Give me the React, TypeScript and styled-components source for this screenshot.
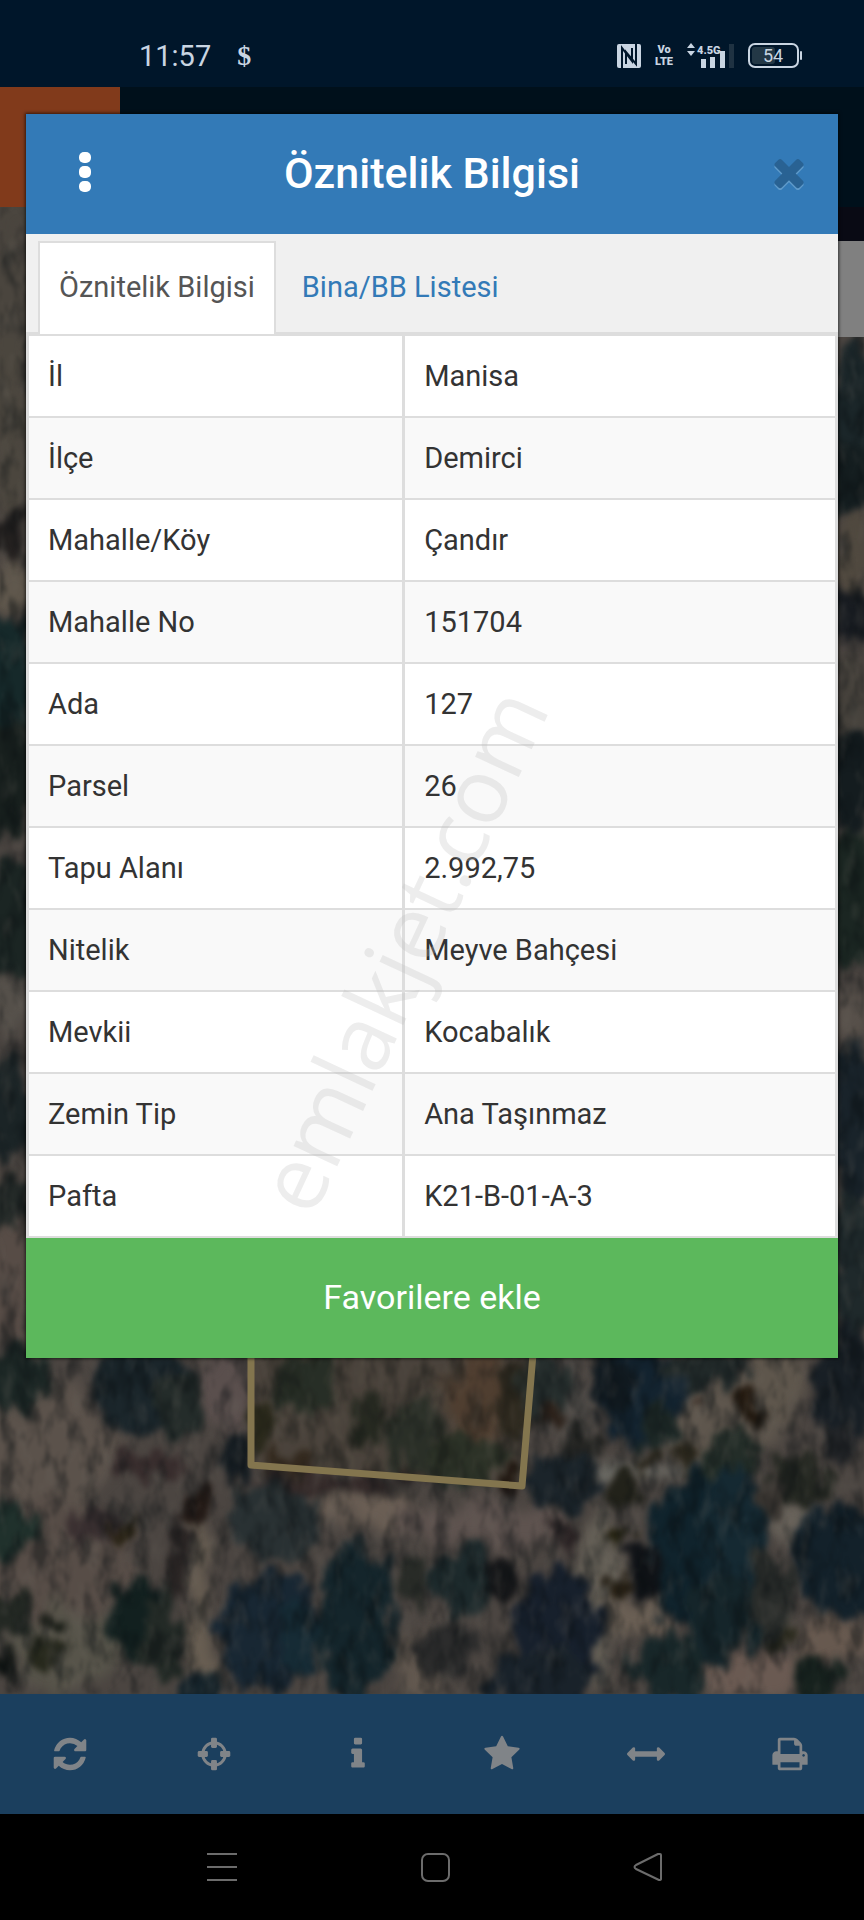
import React from "react";
import styled, { createGlobalStyle } from "styled-components";

const GlobalStyle = createGlobalStyle`
  * { box-sizing: border-box; }
  body { margin: 0; background: #000; }
  body, button { font-family: Roboto, "Noto Sans", sans-serif; }
  button { border: 0; padding: 0; background: none; cursor: pointer; }
  svg { display: block; }
`;

const Screen = styled.div`
  position: relative;
  display: flex;
  flex-direction: column;
  min-height: 100vh;
`;

const StatusBar = styled.div`
  display: flex;
  align-items: center;
  height: 87px;
  padding: 24px 62px 0 139px;
  background: #00162a;
  color: #c9d5e2;
`;

const Clock = styled.span`
  font-size: 29px;
  line-height: 32px;
`;

const Currency = styled.span`
  margin-left: 26px;
  font: bold 28px/32px "Liberation Serif", serif;
`;

const StatusIcons = styled.div`
  display: flex;
  align-items: center;
  gap: 14px;
  margin-left: auto;
`;

const VoLte = styled.span`
  width: 18px;
  font-size: 11px;
  font-weight: 900;
  line-height: 12px;
  text-align: center;
`;

const TopBar = styled.header`
  height: 120px;
  background: #00101b;
`;

const Brand = styled.div`
  width: 120px;
  height: 100%;
  background: #813a1b;
`;

const MapArea = styled.main`
  position: relative;
  flex: 1;
  min-height: 1200px;
  overflow: hidden;
  background: #45403b;
`;

const MapPicture = styled.svg`
  position: absolute;
  inset: 0;
  width: 100%;
  height: 100%;
`;

const MapControl = styled.div`
  position: absolute;
  top: 34px;
  right: 0;
  width: 96px;
  height: 96px;
  background: #808080;
`;

const Toolbar = styled.nav`
  display: grid;
  grid-template-columns: repeat(6, 1fr);
  height: 120px;
  background: #1b3f5e;
`;

const ToolButton = styled.button`
  display: flex;
  align-items: center;
  justify-content: center;
  padding-right: 4px;
  color: #808488;
`;

const SystemNav = styled.nav`
  display: grid;
  grid-template-columns: repeat(3, 1fr);
  height: 106px;
  padding: 0 12.6% 0 13.3%;
  background: #000;
`;

const SystemButton = styled.button`
  display: flex;
  align-items: center;
  justify-content: center;
  color: #6c6c6c;
`;

const Dialog = styled.section`
  position: absolute;
  top: 114px;
  left: 26px;
  right: 26px;
  background: #fff;
  box-shadow: 0 0 3px 1px rgba(0, 0, 0, 0.6);
`;

const DialogHeader = styled.header`
  display: grid;
  grid-template-columns: 116px 1fr 116px;
  align-items: center;
  height: 120px;
  background: #337ab7;
  color: #fff;
`;

const DialogTitle = styled.h1`
  margin: 0;
  padding-bottom: 2px;
  font-size: 43px;
  font-weight: 500;
  line-height: 48px;
  text-align: center;
`;

const HeaderButton = styled.button<{ $end?: boolean }>`
  display: flex;
  align-items: center;
  justify-content: center;
  height: 100%;
  padding: 0 0 4px ${(p) => (p.$end ? 18 : 2)}px;
  color: #fff;
`;

const Tabs = styled.div`
  display: flex;
  align-items: flex-end;
  height: 100px;
  padding: 0 12px;
  border-bottom: 2px solid #ddd;
  background: #f0f0f0;
`;

const Tab = styled.button<{ $active?: boolean }>`
  height: 93px;
  margin-bottom: -2px;
  padding: 0 ${(p) => (p.$active ? 19 : 24)}px 4px;
  border: solid ${(p) => (p.$active ? "#ddd" : "transparent")};
  border-width: 2px 2px 0;
  background: ${(p) => (p.$active ? "#fff" : "transparent")};
  color: ${(p) => (p.$active ? "#555" : "#337ab7")};
  font-size: 29px;
  line-height: 36px;
`;

const TableWrap = styled.div`
  position: relative;
`;

const Table = styled.table`
  width: 100%;
  table-layout: fixed;
  border-collapse: collapse;
  color: #333;
  font-size: 29px;
  line-height: 36px;
`;

const Row = styled.tr`
  height: 82px;
  &:nth-child(even) { background: #f9f9f9; }
`;

const NameCell = styled.th`
  width: 46.5%;
  padding: 0 19px;
  border: solid #ddd;
  border-width: 2px 3px;
  font-weight: 400;
  text-align: left;
`;

const ValueCell = styled.td`
  padding: 0 19px;
  border: solid #ddd;
  border-width: 2px 3px;
`;

const Watermark = styled.span`
  position: absolute;
  top: 68%;
  left: 46%;
  color: rgba(190, 190, 190, 0.28);
  font: 90px/100px "Open Sans", sans-serif;
  transform: translate(-50%, -50%) rotate(-65deg);
  pointer-events: none;
`;

const FavouriteButton = styled.button`
  display: block;
  width: 100%;
  height: 120px;
  padding-bottom: 2px;
  background: #5cb85c;
  color: #fff;
  font-size: 34px;
  line-height: 40px;
`;

const rows: [string, string][] = [
  ["İl", "Manisa"],
  ["İlçe", "Demirci"],
  ["Mahalle/Köy", "Çandır"],
  ["Mahalle No", "151704"],
  ["Ada", "127"],
  ["Parsel", "26"],
  ["Tapu Alanı", "2.992,75"],
  ["Nitelik", "Meyve Bahçesi"],
  ["Mevkii", "Kocabalık"],
  ["Zemin Tip", "Ana Taşınmaz"],
  ["Pafta", "K21-B-01-A-3"],
];

const tools: { label: string; icon: React.ReactNode }[] = [
  {
    label: "Yenile",
    icon: (
      <path d="M1639 1056q0 5-1 7-64 268-268 434.5t-478 166.5q-146 0-282.5-55t-243.5-157l-129 129q-19 19-45 19t-45-19-19-45v-448q0-26 19-45t45-19h448q26 0 45 19t19 45-19 45l-137 137q71 66 161 102t187 36q134 0 250-65t186-179q11-17 53-117 8-23 30-23h192q13 0 22.5 9.5t9.5 22.5zm25-800v448q0 26-19 45t-45 19h-448q-26 0-45-19t-19-45 19-45l138-138q-148-137-349-137-134 0-250 65t-186 179q-11 17-53 117-8 23-30 23h-199q-13 0-22.5-9.5t-9.5-22.5v-7q65-268 270-434.5t480-166.5q146 0 284 55.5t245 156.5l130-129q19-19 45-19t45 19 19 45z" />
    ),
  },
  {
    label: "Konumum",
    icon: (
      <>
        <circle cx="896" cy="896" r="530" fill="none" stroke="currentColor" strokeWidth="140" />
        <rect x="756" y="128" width="280" height="480" rx="64" />
        <rect x="756" y="1184" width="280" height="480" rx="64" />
        <rect x="128" y="756" width="480" height="280" rx="64" />
        <rect x="1184" y="756" width="480" height="280" rx="64" />
      </>
    ),
  },
  {
    label: "Bilgi",
    icon: (
      <path d="M1216 1344v128q0 26-19 45t-45 19h-512q-26 0-45-19t-19-45v-128q0-26 19-45t45-19h64v-384h-64q-26 0-45-19t-19-45v-128q0-26 19-45t45-19h384q26 0 45 19t19 45v576h64q26 0 45 19t19 45zm-128-1152v192q0 26-19 45t-45 19h-256q-26 0-45-19t-19-45v-192q0-26 19-45t45-19h256q26 0 45 19t19 45z" />
    ),
  },
  {
    label: "Favoriler",
    icon: (
      <path d="M1728 647q0 22-26 48l-363 354 86 500q1 7 1 20 0 21-10.5 35.5t-30.5 14.5q-19 0-40-12l-449-236-449 236q-22 12-40 12-21 0-31.5-14.5t-10.5-35.5q0-6 2-20l86-500-364-354q-25-27-25-48 0-37 56-46l502-73 225-455q19-41 49-41t49 41l225 455 502 73q56 9 56 46z" />
    ),
  },
  {
    label: "Ölçüm",
    icon: (
      <path d="M1792 896q0 26-19 45l-256 256q-19 19-45 19t-45-19-19-45v-128h-1024v128q0 26-19 45t-45 19-45-19l-256-256q-19-19-19-45t19-45l256-256q19-19 45-19t45 19 19 45v128h1024v-128q0-26 19-45t45-19 45 19l256 256q19 19 19 45z" />
    ),
  },
  {
    label: "Yazdır",
    icon: (
      <path d="M448 1536h896v-256h-896v256zm0-640h896v-384h-160q-40 0-68-28t-28-68v-160h-640v640zm1152 64q0-26-19-45t-45-19-45 19-19 45 19 45 45 19 45-19 19-45zm128 0v416q0 13-9.5 22.5t-22.5 9.5h-224v160q0 40-28 68t-68 28h-960q-40 0-68-28t-28-68v-160h-224q-13 0-22.5-9.5t-9.5-22.5v-416q0-79 56.5-135.5t135.5-56.5h64v-544q0-40 28-68t68-28h672q40 0 88 20t76 48l152 152q28 28 48 76t20 88v256h64q79 0 135.5 56.5t56.5 135.5z" />
    ),
  },
];

type Blob = [number, number, number, number, string];

/* Lighter patches of bare soil: centre x, centre y, radius x, radius y, colour. */
const soil: Blob[] = [
  [45, 1450, 75, 60, "#5b524b"],
  [60, 1560, 80, 60, "#574d47"],
  [70, 1650, 60, 45, "#57544a"],
  [200, 1610, 16, 90, "#685e52"],
  [225, 1395, 26, 44, "#5a4f4d"],
  [370, 1505, 60, 18, "#6a5e54"],
  [480, 1525, 90, 22, "#5e534f"],
  [420, 1665, 24, 40, "#62584f"],
  [600, 1590, 26, 90, "#645f56"],
  [575, 1400, 20, 44, "#524e4a"],
  [720, 1420, 55, 50, "#5e564d"],
  [775, 1375, 30, 44, "#5e564c"],
  [800, 1525, 34, 20, "#68625a"],
  [640, 1475, 70, 12, "#6a6963"],
  [750, 1675, 54, 26, "#6a5a52"],
  [840, 1642, 44, 18, "#67594f"],
  [640, 1618, 44, 16, "#6a5f54"],
  [480, 1400, 34, 45, "#503f34"],
  [10, 300, 24, 120, "#4a453e"],
  [10, 425, 24, 90, "#4b463e"],
  [10, 590, 24, 20, "#5e564b"],
  [10, 1000, 24, 30, "#55504a"],
  [10, 1260, 24, 90, "#574c46"],
  [850, 560, 20, 50, "#50493f"],
  [850, 700, 20, 50, "#45413b"],
  [850, 1010, 20, 30, "#57504a"],
];

const trees: Blob[] = [
  [14, 1378, 38, 32, "#1c2725"],
  [140, 1388, 48, 48, "#1b262b"],
  [180, 1410, 26, 30, "#242c2a"],
  [10, 1530, 28, 26, "#20312c"],
  [95, 1526, 27, 17, "#3a3031"],
  [128, 1526, 12, 16, "#2a2416"],
  [197, 1507, 9, 18, "#231a16"],
  [178, 1560, 10, 50, "#2a2524"],
  [142, 1622, 32, 44, "#12201f"],
  [165, 1630, 20, 50, "#232a26"],
  [12, 1616, 22, 24, "#232823"],
  [60, 1619, 9, 9, "#161a14"],
  [48, 1655, 20, 16, "#26281c"],
  [3, 1665, 10, 14, "#111513"],
  [148, 1464, 38, 14, "#382d2d"],
  [234, 1460, 15, 26, "#151c21"],
  [275, 1522, 50, 38, "#293133"],
  [268, 1632, 52, 62, "#182733"],
  [300, 1640, 20, 40, "#162b35"],
  [356, 1620, 38, 78, "#14252b"],
  [200, 1690, 30, 18, "#15232a"],
  [412, 1580, 15, 20, "#282b27"],
  [305, 1385, 34, 34, "#232d28"],
  [262, 1425, 12, 22, "#26271c"],
  [366, 1420, 16, 28, "#212722"],
  [290, 1465, 26, 14, "#30271f"],
  [415, 1440, 26, 42, "#262e2a"],
  [466, 1460, 36, 26, "#283129"],
  [340, 1482, 90, 9, "#342a29"],
  [512, 1400, 14, 42, "#29261f"],
  [512, 1475, 10, 14, "#1b1411"],
  [545, 1385, 26, 34, "#262e2d"],
  [548, 1412, 18, 10, "#2c221b"],
  [640, 1396, 46, 50, "#13232f"],
  [610, 1385, 20, 30, "#111a20"],
  [660, 1430, 20, 24, "#1d2826"],
  [705, 1368, 42, 18, "#212929"],
  [747, 1403, 14, 16, "#241a10"],
  [700, 1403, 7, 7, "#33221a"],
  [846, 1385, 34, 58, "#181f25"],
  [845, 1440, 20, 18, "#232528"],
  [585, 1446, 20, 15, "#212220"],
  [564, 1482, 38, 30, "#1b242a"],
  [623, 1493, 16, 18, "#22221a"],
  [685, 1458, 11, 8, "#28251b"],
  [648, 1460, 6, 6, "#262319"],
  [728, 1456, 26, 26, "#232d28"],
  [802, 1482, 30, 28, "#252822"],
  [620, 1538, 12, 13, "#22200f"],
  [563, 1536, 9, 11, "#292223"],
  [705, 1550, 58, 84, "#10232c"],
  [735, 1530, 34, 60, "#152932"],
  [720, 1620, 34, 46, "#15252a"],
  [845, 1560, 56, 56, "#13212a"],
  [770, 1500, 14, 22, "#383430"],
  [465, 1582, 34, 34, "#1d2a2c"],
  [500, 1580, 12, 22, "#161719"],
  [558, 1636, 46, 66, "#17202c"],
  [540, 1680, 56, 30, "#19222a"],
  [450, 1650, 28, 30, "#2c2c2c"],
  [642, 1575, 12, 26, "#101317"],
  [618, 1588, 9, 11, "#261f14"],
  [672, 1668, 40, 34, "#182729"],
  [775, 1634, 19, 19, "#27271a"],
  [815, 1680, 26, 22, "#17221e"],
  [770, 1600, 18, 50, "#292c2a"],
  [8, 535, 22, 26, "#23201f"],
  [10, 680, 28, 70, "#16292a"],
  [8, 780, 26, 60, "#18201e"],
  [10, 920, 28, 60, "#1b2523"],
  [10, 1110, 26, 50, "#1b2426"],
  [10, 1200, 22, 30, "#242a28"],
  [852, 400, 26, 60, "#1b2629"],
  [850, 480, 24, 40, "#151e20"],
  [852, 620, 24, 26, "#171b20"],
  [852, 780, 26, 50, "#141c1f"],
  [852, 900, 26, 70, "#1b2622"],
  [852, 1120, 26, 80, "#19232a"],
  [852, 1260, 24, 70, "#1f292b"],
];

const Blobs = ({ items }: { items: Blob[] }) => (
  <>
    {items.map(([cx, cy, rx, ry, fill], i) => (
      <ellipse key={i} cx={cx} cy={cy} rx={rx} ry={ry} fill={fill} />
    ))}
  </>
);

const SatelliteMap = () => (
  <MapPicture viewBox="0 207 864 1487" preserveAspectRatio="xMidYMax slice" aria-hidden="true">
    <defs>
      <filter id="soilEdge" x="-10%" y="-10%" width="120%" height="120%" colorInterpolationFilters="sRGB">
        <feTurbulence type="fractalNoise" baseFrequency="0.03" numOctaves="3" seed="4" result="n" />
        <feDisplacementMap in="SourceGraphic" in2="n" scale="50" xChannelSelector="R" yChannelSelector="G" result="d" />
        <feGaussianBlur in="d" stdDeviation="6" />
      </filter>
      <filter id="treeEdge" x="-10%" y="-10%" width="120%" height="120%" colorInterpolationFilters="sRGB">
        <feTurbulence type="fractalNoise" baseFrequency="0.06 0.03" numOctaves="4" seed="9" result="n" />
        <feDisplacementMap in="SourceGraphic" in2="n" scale="44" xChannelSelector="R" yChannelSelector="G" result="d" />
        <feGaussianBlur in="d" stdDeviation="3" />
      </filter>
      <filter id="shade" x="0" y="0" width="100%" height="100%" colorInterpolationFilters="sRGB">
        <feTurbulence type="fractalNoise" baseFrequency="0.06 0.03" numOctaves="3" seed="21" />
        <feColorMatrix values="0 0 0 0 0.03  0 0 0 0 0.05  0 0 0 0 0.06  3 0 0 0 -1.3" />
        <feGaussianBlur stdDeviation="1" />
      </filter>
      <filter id="light" x="0" y="0" width="100%" height="100%" colorInterpolationFilters="sRGB">
        <feTurbulence type="fractalNoise" baseFrequency="0.07 0.03" numOctaves="3" seed="5" />
        <feColorMatrix values="0 0 0 0 0.44  0 0 0 0 0.42  0 0 0 0 0.39  3 0 0 0 -1.5" />
        <feGaussianBlur stdDeviation="1" />
      </filter>
    </defs>
    <rect y="207" width="864" height="1487" fill="#4b4541" />
    <g filter="url(#soilEdge)"><Blobs items={soil} /></g>
    <g filter="url(#treeEdge)"><Blobs items={trees} /></g>
    <rect y="207" width="864" height="1487" filter="url(#shade)" opacity="0.42" />
    <rect y="207" width="864" height="1487" filter="url(#light)" opacity="0.18" />
    <path d="M838 207h26v34h-26z" fill="#090a14" />
    <path
      d="M251 1330V1465L522 1486L535 1330"
      fill="rgba(70,55,25,0.12)"
      stroke="#83754e"
      strokeWidth="7"
      strokeLinejoin="round"
    />
  </MapPicture>
);

const NfcIcon = () => (
  <svg width="24" height="24" viewBox="0 0 24 24" aria-label="NFC">
    <rect width="24" height="24" rx="2" fill="currentColor" />
    <path d="M5 24V4l10 13V4M19 0v20L9 8v12" fill="none" stroke="#00162a" strokeWidth="2" />
  </svg>
);

const SignalIcon = () => (
  <svg width="47" height="26" viewBox="0 0 47 26" fill="currentColor" aria-label="4.5G">
    <path d="M0 5l4-5 4 5zM0 8h8l-4 5z" />
    <text x="10" y="11" fontFamily="Roboto" fontSize="11" fontWeight="900">4.5G</text>
    <path d="M14 16h5v9h-5zM23 14h5v11h-5zM33 8h5v17h-5z" />
    <path d="M42 1h5v24h-5z" fill="#1f3242" />
  </svg>
);

const BatteryIcon = () => (
  <svg width="54" height="25" viewBox="0 0 54 25" fill="currentColor" aria-label="54">
    <rect x="1" y="1" width="49" height="23" rx="6" fill="none" stroke="currentColor" strokeWidth="2" />
    <rect x="4" y="4" width="23" height="17" rx="3" fill="#233846" />
    <rect x="52" y="8" width="2" height="9" rx="1" />
    <text x="25" y="19" fontFamily="Roboto" fontSize="18" textAnchor="middle">54</text>
  </svg>
);

const KebabIcon = () => (
  <svg width="12" height="40" viewBox="0 0 12 40" fill="currentColor" aria-hidden="true">
    <rect width="12" height="11" rx="5" />
    <rect y="14" width="12" height="12" rx="5" />
    <rect y="29" width="12" height="11" rx="5" />
  </svg>
);

const closePath =
  "M1490 1322q0 40-28 68l-136 136q-28 28-68 28t-68-28l-294-294-294 294q-28 28-68 28t-68-28l-136-136q-28-28-28-68t28-68l294-294-294-294q-28-28-28-68t28-68l136-136q28-28 68-28t68 28l294 294 294-294q28-28 68-28t68 28l136 136q28 28 28 68t-28 68l-294 294 294 294q28 28 28 68z";

const CloseIcon = () => (
  <svg width="44" height="44" viewBox="0 0 1792 1792" aria-hidden="true">
    <path d={closePath} fill="#5f9aca" transform="translate(0 80)" />
    <path d={closePath} fill="#296293" />
  </svg>
);

export default function App() {
  return (
    <Screen>
      <GlobalStyle />
      <StatusBar>
        <Clock>11:57</Clock>
        <Currency>$</Currency>
        <StatusIcons>
          <NfcIcon />
          <VoLte>Vo<br />LTE</VoLte>
          <SignalIcon />
          <BatteryIcon />
        </StatusIcons>
      </StatusBar>
      <TopBar><Brand /></TopBar>
      <MapArea>
        <SatelliteMap />
        <MapControl />
      </MapArea>
      <Toolbar>
        {tools.map((tool) => (
          <ToolButton key={tool.label} type="button" aria-label={tool.label}>
            <svg width="38" height="38" viewBox="0 0 1792 1792" fill="currentColor" aria-hidden="true">
              {tool.icon}
            </svg>
          </ToolButton>
        ))}
      </Toolbar>
      <SystemNav>
        <SystemButton type="button" aria-label="Son uygulamalar">
          <svg width="30" height="30" viewBox="0 0 30 30" fill="none" stroke="currentColor" strokeWidth="2">
            <path d="M0 2h30M0 15h30M0 28h30" />
          </svg>
        </SystemButton>
        <SystemButton type="button" aria-label="Ana ekran">
          <svg width="30" height="30" viewBox="0 0 30 30" fill="none" stroke="currentColor" strokeWidth="2">
            <rect x="2" y="2" width="27" height="27" rx="6" />
          </svg>
        </SystemButton>
        <SystemButton type="button" aria-label="Geri">
          <svg width="30" height="30" viewBox="0 0 30 30" fill="none" stroke="currentColor" strokeWidth="2" strokeLinejoin="round">
            <path d="M27 2q1 0 1 1v24q0 1-2 1L3 17q-3-2 0-4L25 2z" />
          </svg>
        </SystemButton>
      </SystemNav>
      <Dialog role="dialog" aria-labelledby="dialogTitle">
        <DialogHeader>
          <HeaderButton type="button" aria-label="Menü"><KebabIcon /></HeaderButton>
          <DialogTitle id="dialogTitle">Öznitelik Bilgisi</DialogTitle>
          <HeaderButton type="button" aria-label="Kapat" $end><CloseIcon /></HeaderButton>
        </DialogHeader>
        <Tabs role="tablist">
          <Tab type="button" role="tab" aria-selected="true" $active>Öznitelik Bilgisi</Tab>
          <Tab type="button" role="tab" aria-selected="false">Bina/BB Listesi</Tab>
        </Tabs>
        <TableWrap>
          <Table>
            <tbody>
              {rows.map(([name, value]) => (
                <Row key={name}>
                  <NameCell scope="row">{name}</NameCell>
                  <ValueCell>{value}</ValueCell>
                </Row>
              ))}
            </tbody>
          </Table>
          <Watermark>emlakjet.com</Watermark>
        </TableWrap>
        <FavouriteButton type="button">Favorilere ekle</FavouriteButton>
      </Dialog>
    </Screen>
  );
}
